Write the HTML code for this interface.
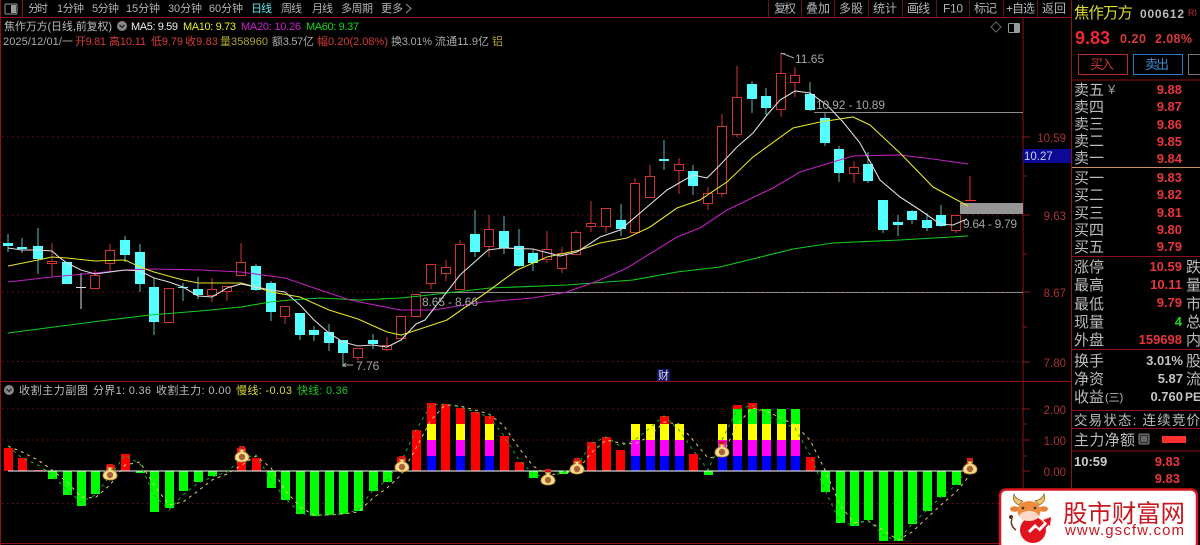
<!DOCTYPE html>
<html><head><meta charset="utf-8"><style>
html,body{margin:0;padding:0;background:#000;width:1200px;height:545px;overflow:hidden}
svg{display:block}
text{font-family:"Liberation Sans","Noto Sans CJK SC",sans-serif;white-space:pre}
.t{font-size:11px;fill:#b4b4b4}
.r{font-size:12px;fill:#b4b4b4}
.h{font-size:11px}
.l{font-size:15px;fill:#bcbcbc}
.p{font-size:13px;font-weight:bold;fill:#e8363c;text-anchor:end}
.a{font-size:11.5px;fill:#a83232;text-anchor:end}
.n{font-size:12px;fill:#a4a4a4}
</style></head><body>
<svg width="1200" height="545" viewBox="0 0 1200 545" xmlns="http://www.w3.org/2000/svg">
<defs>
<g id="bag"><path d="M-3-10h6v4h-6z" fill="#d8141c"/><path d="M-2.500-6.500 2.500-6.500 1.500-4.500C5.500-3 7-.5 7 1.500 7 4.800 3.500 6 0 6-3.500 6-7 4.800-7 1.500-7-.5-5.500-3-1.500-4.500z" fill="#f8e08c" stroke="#b98a3a" stroke-width="1"/><circle cx="0" cy="1" r="3.200" fill="#a8623c"/></g>
</defs>
<rect width="1200" height="545" fill="#000"/>
<!-- frame -->
<path d="M0.500 0V545M0 17.500H1072M22.500 0V17M1023 18V490M1071.500 0V545M0 381.500H1072M0 543.500H1000" stroke="#8c1418" stroke-width="1" fill="none"/>
<path d="M768.500 0V17M801.500 0V17M834.500 0V17M868.500 0V17M902.500 0V17M936.500 0V17M969.500 0V17M1003.500 0V17M1037.500 0V17" stroke="#6a1015" fill="none"/>
<rect x="5" y="4" width="12" height="10" rx="1" fill="none" stroke="#999"/><rect x="11" y="5" width="5" height="8" fill="#999"/>
<!-- toolbar -->
<g>
<text class="t" x="28" y="12" textLength="20">分时</text>
<text class="t" x="57" y="12" textLength="27">1分钟</text>
<text class="t" x="92" y="12" textLength="27">5分钟</text>
<text class="t" x="126" y="12" textLength="34">15分钟</text>
<text class="t" x="168" y="12" textLength="34">30分钟</text>
<text class="t" x="209" y="12" textLength="34">60分钟</text>
<text class="t" x="251" y="12" textLength="21" style="fill:#5fe6e6">日线</text>
<text class="t" x="281" y="12" textLength="21">周线</text>
<text class="t" x="312" y="12" textLength="21">月线</text>
<text class="t" x="341" y="12" textLength="32">多周期</text>
<text class="t" x="381" y="12" textLength="22">更多</text>
<path d="M406 4 411 8.500 406 13" stroke="#999" fill="none"/>
<text class="r" x="774" y="12.500" textLength="22">复权</text>
<text class="r" x="806" y="12.500" textLength="24">叠加</text>
<text class="r" x="839" y="12.500" textLength="24">多股</text>
<text class="r" x="873" y="12.500" textLength="24">统计</text>
<text class="r" x="907" y="12.500" textLength="23">画线</text>
<text class="r" x="943" y="12.500" textLength="20">F10</text>
<text class="r" x="974" y="12.500" textLength="23">标记</text>
<text class="r" x="1006" y="12.500" textLength="29">+自选</text>
<text class="r" x="1042" y="12.500" textLength="24">返回</text>
</g>
<!-- headers -->
<text class="h" x="4" y="30" textLength="108" fill="#bbb">焦作万方(日线,前复权)</text>
<circle cx="122" cy="26" r="5" fill="#888"/><path d="M119.500 25 122 27.500 124.500 25" stroke="#222" stroke-width="1.300" fill="none"/>
<text class="h" x="131" y="30" textLength="47" fill="#eee">MA5: 9.59</text>
<text class="h" x="183" y="30" textLength="53" fill="#e8e82a">MA10: 9.73</text>
<text class="h" x="241" y="30" textLength="60" fill="#d020d0">MA20: 10.26</text>
<text class="h" x="306" y="30" textLength="53" fill="#18d818">MA60: 9.37</text>
<text class="h" x="3" y="45" textLength="70" fill="#aaa">2025/12/01/一</text>
<text class="h" x="75" y="45" textLength="31" fill="#d53a3a">开9.81</text>
<text class="h" x="109" y="45" textLength="37" fill="#d53a3a">高10.11</text>
<text class="h" x="151" y="45" textLength="32" fill="#d53a3a">低9.79</text>
<text class="h" x="185" y="45" textLength="33" fill="#d53a3a">收9.83</text>
<text class="h" x="220" y="45" textLength="48" fill="#b0a530">量358960</text>
<text class="h" x="272" y="45" textLength="42" fill="#aaa">额3.57亿</text>
<text class="h" x="317" y="45" textLength="71" fill="#d53a3a">幅0.20(2.08%)</text>
<text class="h" x="391" y="45" textLength="41" fill="#aaa">换3.01%</text>
<text class="h" x="435" y="45" textLength="54" fill="#aaa">流通11.9亿</text>
<text class="h" x="492" y="45" textLength="11" fill="#b0a530">铝</text>
<path d="M996 22 1001 27 996 32 991 27z" fill="none" stroke="#666"/>
<rect x="1008.500" y="23.500" width="11" height="9" rx="1" fill="none" stroke="#999"/><rect x="1014" y="24" width="5" height="8" fill="#999"/>
<!-- dotted grid -->
<path d="M2 137H1023M2 215H1023M2 292H1023M2 361.500H1023M2 409H1023M2 440H1023M2 503.500H1000" stroke="#6e1616" stroke-dasharray="1.500 3.500" fill="none"/>
<!-- axis ticks -->
<path d="M1023 137h7M1023 215h7M1023 292h7M1023 362h7M1023 409h7M1023 440h7M1023 471h7M1023 424h4M1023 456h4M1023 176h4M1023 254h4M1023 327h4" stroke="#8a1a1a" fill="none"/>
<text class="a" x="1066" y="142">10.59</text>
<text class="a" x="1066" y="220">9.63</text>
<text class="a" x="1066" y="297">8.67</text>
<text class="a" x="1066" y="367">7.80</text>
<text class="a" x="1066" y="414">2.00</text>
<text class="a" x="1066" y="445">1.00</text>
<text class="a" x="1066" y="476">0.00</text>
<rect x="1023" y="149" width="48" height="14" fill="#0a0a96"/>
<text x="1024" y="160" font-size="11.500" fill="#cfcfe8">10.27</text>
<!-- pressure lines -->
<path d="M814 112.500H1023M420 292.500H1023" stroke="#8c8c8c" fill="none"/>
<rect x="960" y="203" width="63" height="11" fill="#969696"/>
<!-- wicks -->
<path fill="none" stroke="#58bcbc" d="M8 234V252M22 238V253M38 228V274M125 236V262M140 244V292M154 278V335M183 283V301M198 277V299M256 264V291M271 281V321M300 313V340M314 326V341M329 324V351M343 340V367M373 334V349M475 210V257M504 216V254M519 229V267M533 249V271M621 204V236M664 140V170M693 165V195M752 81V113M766 88V115M810 82V111M825 113V146M839 146V182M868 152V183M883 200V233M898 215V236M912 210V224M927 213V231M941 205V227"/>
<path fill="none" stroke="#d23434" d="M52 243V277M95 270V288M110 244V272M169 288V323M212 278V302M227 286V301M241 243V275M285 306V324M358 348V360M387 337V351M431 264V289M446 260V281M460 240V289M489 215V257M547 231V263M562 247V273M576 230V254M591 201V232M606 208V233M635 178V233M650 165V197M679 158V194M708 187V210M722 114V197M737 66V137M781 53V117M795 67V97M854 161V183M956 215V233"/>
<path fill="none" stroke="#ff2a2a" d="M970 176V200M965 200.500H976"/>
<path fill="none" stroke="#ddd" d="M81 273V309M76 287.500H86"/>
<!-- cyan bodies -->
<path fill="#55ffff" d="M3 243h10v3h-10zM17 247h10v2h-10zM33 246h10v13h-10zM62 262h10v22h-10zM120 240h10v15h-10zM135 252h10v32h-10zM149 287h10v35h-10zM178 287h10v1h-10zM193 289h10v6h-10zM251 266h10v24h-10zM266 283h10v29h-10zM295 313h10v22h-10zM309 330h10v5h-10zM324 332h10v11h-10zM338 340h10v13h-10zM368 340h10v4h-10zM470 234h10v18h-10zM499 231h10v17h-10zM514 246h10v20h-10zM528 253h10v10h-10zM616 220h10v9h-10zM659 159h10v2h-10zM688 171h10v15h-10zM747 84h10v15h-10zM761 96h10v12h-10zM805 94h10v16h-10zM820 118h10v25h-10zM834 149h10v24h-10zM863 164h10v17h-10zM878 200h10v30h-10zM893 222h10v3h-10zM907 211h10v9h-10zM922 220h10v8h-10zM936 215h10v11h-10z"/>
<!-- red bodies -->
<g fill="#000" stroke="#d23434" stroke-width="1">
<rect x="47.500" y="261.500" width="9" height="2"/><rect x="90.500" y="275.500" width="9" height="13"/><rect x="105.500" y="250.500" width="9" height="13"/><rect x="164.500" y="288.500" width="9" height="34"/><rect x="207.500" y="289.500" width="9" height="6"/><rect x="222.500" y="286.500" width="9" height="5"/><rect x="236.500" y="262.500" width="9" height="13"/><rect x="280.500" y="306.500" width="9" height="10"/><rect x="353.500" y="348.500" width="9" height="9"/><rect x="382.500" y="345.500" width="9" height="4"/><rect x="396.500" y="316.500" width="9" height="22"/><rect x="411.500" y="294.500" width="9" height="22"/><rect x="426.500" y="264.500" width="9" height="19"/><rect x="441.500" y="267.500" width="9" height="6"/><rect x="455.500" y="244.500" width="9" height="45"/><rect x="484.500" y="229.500" width="9" height="17"/><rect x="542.500" y="249.500" width="9" height="10"/><rect x="557.500" y="253.500" width="9" height="15"/><rect x="571.500" y="232.500" width="9" height="22"/><rect x="586.500" y="223.500" width="9" height="3"/><rect x="601.500" y="208.500" width="9" height="18"/><rect x="630.500" y="183.500" width="9" height="49"/><rect x="645.500" y="176.500" width="9" height="21"/><rect x="674.500" y="164.500" width="9" height="6"/><rect x="703.500" y="193.500" width="9" height="10"/><rect x="717.500" y="126.500" width="9" height="67"/><rect x="732.500" y="97.500" width="9" height="37"/><rect x="776.500" y="73.500" width="9" height="36"/><rect x="790.500" y="75.500" width="9" height="7"/><rect x="849.500" y="167.500" width="9" height="6"/><rect x="951.500" y="215.500" width="9" height="15"/>
</g>
<!-- MA lines -->
<polyline fill="none" stroke="#0fce1a" stroke-width="1.100" points="8,333 100,321 150,315 200,311 241,307 270,302 290,300 320,298 360,300 400,298 420,296 490,288 567,285 633,280 677,272 720,267 793,249 833,243 900,240 968,236"/>
<polyline fill="none" stroke="#c020c0" stroke-width="1.100" points="8,282 52,277 95,273 125,270 154,269 200,270 241,272 285,278 320,290 350,300 400,310 433,310 483,302 533,298 567,292 600,280 627,268 677,237 700,228 727,210 773,188 800,172 833,162 853,156 900,155 933,159 968,164"/>
<polyline fill="none" stroke="#e4e428" stroke-width="1.100" points="8,266 38,260 52,257 67,258 95,261 125,260 140,267 154,272 183,280 198,283 241,283 256,287 271,292 300,297 329,310 358,319 387,332 401,335 420,329 447,320 487,292 517,270 547,257 580,250 600,243 627,238 650,227 677,208 700,200 727,182 753,157 793,128 820,122 853,117 870,125 900,153 933,187 968,206"/>
<polyline fill="none" stroke="#dcdcdc" stroke-width="1.100" points="8,248 22,250 38,250 52,251 60,258 67,263 81,270 95,274 110,272 125,270 140,271 154,278 169,282 183,287 198,296 212,297 227,288 241,284 256,287 271,290 285,292 300,305 314,320 329,333 343,342 358,346 373,345 387,347 401,340 416,324 425,320 460,275 488,250 503,248 533,249 560,256 577,252 600,237 620,230 640,213 667,190 693,175 707,178 720,165 737,147 753,133 767,115 780,100 795,91 810,93 827,105 843,122 860,143 880,180 900,197 920,210 940,224 953,225 967,219"/>
<!-- annotations -->
<path d="M781 53.500 H785 M781 53 L794 58" stroke="#aaa" fill="none"/>
<text class="n" x="795" y="63">11.65</text>
<text class="n" x="816" y="109" textLength="69">10.92 - 10.89</text>
<text class="n" x="963" y="228" textLength="54">9.64 - 9.79</text>
<text class="n" x="422" y="306" textLength="56">8.65 - 8.66</text>
<path d="M343 365H353M343 365l3-2M343 365l3 2" stroke="#aaa" fill="none"/>
<text class="n" x="356" y="370">7.76</text>
<rect x="657" y="369" width="13" height="12" fill="#12126a"/>
<text x="658" y="379" font-size="11" fill="#ddd">财</text>
<!-- sub header -->
<circle cx="9" cy="390" r="5" fill="#888"/><path d="M6.500 389 9 391.500 11.500 389" stroke="#222" stroke-width="1.300" fill="none"/>
<text class="h" x="19" y="394" textLength="69" fill="#bbb">收割主力副图</text>
<text class="h" x="93" y="394" textLength="58" fill="#bbb">分界1: 0.36</text>
<text class="h" x="156" y="394" textLength="75" fill="#bbb">收割主力: 0.00</text>
<text class="h" x="236" y="394" textLength="56" fill="#d8d838">慢线: -0.03</text>
<text class="h" x="297" y="394" textLength="51" fill="#1ac81a">快线: 0.36</text>
<!-- sub bars -->
<path fill="#ff0000" d="M4 448h9v23h-9zM18 458h9v13h-9zM34 470h9v1h-9zM106 465h9v6h-9zM121 454h9v17h-9zM237 448h9v23h-9zM252 458h9v13h-9zM397 457h9v14h-9zM412 430h9v41h-9zM427 403h9v21h-9zM441 404h9v67h-9zM456 408h9v16h-9zM471 412h9v59h-9zM485 416h9v8h-9zM500 436h9v35h-9zM515 462h9v9h-9zM573 460h9v11h-9zM587 442h9v29h-9zM602 437h9v34h-9zM616 450h9v21h-9zM660 416h9v8h-9zM689 454h9v17h-9zM733 405h9v4h-9zM748 403h9v6h-9zM806 457h9v14h-9zM966 463h6v8h-6z"/>
<path fill="#ffff00" d="M427 424h9v16h-9zM456 424h9v16h-9zM485 424h9v16h-9zM631 424h9v16h-9zM646 424h9v16h-9zM660 424h9v16h-9zM675 424h9v16h-9zM718 424h9v16h-9zM733 424h9v16h-9zM748 424h9v16h-9zM762 424h9v16h-9zM777 424h9v16h-9zM791 424h9v16h-9z"/>
<path fill="#ff00ff" d="M427 440h9v16h-9zM456 440h9v16h-9zM485 440h9v16h-9zM631 440h9v16h-9zM646 440h9v16h-9zM660 440h9v16h-9zM675 440h9v16h-9zM718 440h9v16h-9zM733 440h9v16h-9zM748 440h9v16h-9zM762 440h9v16h-9zM777 440h9v16h-9zM791 440h9v16h-9z"/>
<path fill="#0000ff" d="M427 456h9v15h-9zM456 456h9v15h-9zM485 456h9v15h-9zM631 456h9v15h-9zM646 456h9v15h-9zM660 456h9v15h-9zM675 456h9v15h-9zM718 456h9v15h-9zM733 456h9v15h-9zM748 456h9v15h-9zM762 456h9v15h-9zM777 456h9v15h-9zM791 456h9v15h-9z"/>
<path fill="#00ff00" d="M48 471h9v8h-9zM63 471h9v24h-9zM77 471h9v35h-9zM91 471h9v23h-9zM136 471h9v2h-9zM150 471h9v41h-9zM165 471h9v37h-9zM179 471h9v20h-9zM194 471h9v11h-9zM208 471h9v5h-9zM267 471h9v17h-9zM281 471h9v29h-9zM296 471h9v43h-9zM310 471h9v45h-9zM325 471h9v44h-9zM339 471h9v43h-9zM354 471h9v40h-9zM369 471h9v20h-9zM383 471h9v11h-9zM529 471h9v7h-9zM559 471h9v3h-9zM704 471h9v4h-9zM733 409h9v15h-9zM748 409h9v15h-9zM762 409h9v15h-9zM777 409h9v15h-9zM791 409h9v15h-9zM821 471h9v21h-9zM836 471h9v52h-9zM850 471h9v55h-9zM864 471h9v49h-9zM879 471h9v70h-9zM894 471h9v70h-9zM908 471h9v53h-9zM923 471h9v40h-9zM937 471h9v26h-9zM952 471h9v14h-9z"/>
<path d="M8 471H963" stroke="#fff" stroke-width="1" fill="none"/>
<polyline fill="none" stroke="#e0d070" stroke-dasharray="3 4" points="8,446 22,452 38,460 52,470 67,482 81,497 95,498 110,485 125,465 140,462 154,485 169,505 183,502 198,491 212,480 227,474 242,465 256,456 271,468 285,490 300,507 314,515 329,515 343,514 358,512 373,498 387,488 401,475 416,448 431,420 445,405 460,406 475,410 489,414 504,426 519,448 533,466 548,475 563,473 577,471 591,453 606,440 620,443 635,444 650,436 664,422 679,424 693,440 708,458 722,456 737,425 752,408 766,411 781,418 795,425 810,440 825,470 840,505 854,523 868,521 883,530 898,540 912,532 927,518 941,505 956,492 970,475"/>
<polyline fill="none" stroke="#18b028" stroke-dasharray="3 4" points="8,446 22,458 38,465 52,475 67,490 81,502 95,495 110,476 125,455 140,464 154,495 169,510 183,495 198,483 212,477 227,472 242,458 256,455 271,480 285,498 300,513 314,516 329,515 343,514 358,510 373,490 387,480 401,462 416,430 431,405 445,404 460,407 475,412 489,417 504,436 519,460 533,474 548,478 563,472 577,466 591,444 606,437 620,446 635,440 650,428 664,416 679,430 693,450 708,470 722,440 737,410 752,405 766,415 781,422 795,428 810,455 825,490 840,522 854,525 868,520 883,535 898,541 912,524 927,510 941,497 956,485 970,465"/>
<use href="#bag" x="110" y="474"/><use href="#bag" x="242" y="456"/><use href="#bag" x="402" y="466"/><use href="#bag" x="548" y="479"/><use href="#bag" x="577" y="468"/><use href="#bag" x="722" y="451"/><use href="#bag" x="970" y="468"/>
<!-- side panel -->
<path d="M1072 80H1200M1072 256.500H1200M1072 349.500H1200M1072 410.500H1200M1072 428.500H1200M1072 451H1200" stroke="#8a1218" fill="none"/>
<path d="M1072 167.500H1200" stroke="#c89068" fill="none"/>
<text x="1074" y="18" font-size="15.500" fill="#d8d838" textLength="59">焦作万方</text>
<text x="1140" y="18" font-size="12" font-weight="bold" fill="#bbb" textLength="44">000612</text>
<text x="1188" y="16" font-size="9" fill="#c03030">RI</text>
<text x="1075" y="44" font-size="18" font-weight="bold" fill="#ee2a30">9.83</text>
<text x="1120" y="43" font-size="12.500" font-weight="bold" fill="#d83a3a" textLength="26">0.20</text>
<text x="1155" y="43" font-size="12.500" font-weight="bold" fill="#d83a3a" textLength="37">2.08%</text>
<rect x="1078.500" y="54.500" width="49" height="20" fill="none" stroke="#b82a2a"/>
<text x="1090" y="69" font-size="13" fill="#c83434" textLength="24">买入</text>
<rect x="1133.500" y="54.500" width="49" height="20" fill="none" stroke="#2f78c0"/>
<text x="1145" y="69" font-size="13" fill="#3a8ad0" textLength="24">卖出</text>
<rect x="1188.500" y="54.500" width="20" height="20" fill="none" stroke="#777"/>
<text class="l" x="1074" y="95">卖五</text><text x="1108" y="94" font-size="13" fill="#999">¥</text>
<text class="l" x="1074" y="112">卖四</text><text class="l" x="1074" y="129">卖三</text><text class="l" x="1074" y="146">卖二</text><text class="l" x="1074" y="163">卖一</text>
<text class="p" x="1182" y="94">9.88</text><text class="p" x="1182" y="111">9.87</text><text class="p" x="1182" y="129">9.86</text><text class="p" x="1182" y="146">9.85</text><text class="p" x="1182" y="163">9.84</text>
<text class="l" x="1074" y="183">买一</text><text class="l" x="1074" y="200">买二</text><text class="l" x="1074" y="218">买三</text><text class="l" x="1074" y="235">买四</text><text class="l" x="1074" y="252">买五</text>
<text class="p" x="1182" y="182">9.83</text><text class="p" x="1182" y="199">9.82</text><text class="p" x="1182" y="217">9.81</text><text class="p" x="1182" y="234">9.80</text><text class="p" x="1182" y="251">9.79</text>
<text class="l" x="1074" y="272">涨停</text><text class="l" x="1074" y="290">最高</text><text class="l" x="1074" y="309">最低</text><text class="l" x="1074" y="327">现量</text><text class="l" x="1074" y="345">外盘</text>
<text class="p" x="1182" y="271">10.59</text><text class="p" x="1182" y="289">10.11</text><text class="p" x="1182" y="307">9.79</text><text class="p" x="1182" y="326" style="fill:#18d818">4</text><text class="p" x="1182" y="344">159698</text>
<text class="l" x="1186" y="272">跌</text><text class="l" x="1186" y="290">量</text><text class="l" x="1186" y="309">市</text><text class="l" x="1186" y="327">总</text><text class="l" x="1186" y="345">内</text>
<text class="l" x="1074" y="366">换手</text><text class="l" x="1074" y="384">净资</text><text class="l" x="1074" y="402">收益</text><text x="1105" y="401" font-size="11" fill="#bbb">(三)</text>
<text class="p" x="1183" y="365" style="fill:#c4c4c4">3.01%</text><text class="p" x="1183" y="383" style="fill:#c4c4c4">5.87</text><text class="p" x="1183" y="401" style="fill:#c4c4c4">0.760</text>
<text class="l" x="1186" y="366">股</text><text class="l" x="1186" y="384">流</text><text x="1185" y="401" font-size="12" font-weight="bold" fill="#c4c4c4">PE</text>
<text class="l" x="1074" y="425" style="font-size:13.500px" textLength="126">交易状态: 连续竞价</text>
<text class="l" x="1074" y="445" textLength="61">主力净额</text>
<rect x="1139" y="434" width="10" height="10" rx="1" fill="#333" stroke="#888"/><path d="M1141 437h6M1141 439h6M1141 441h6" stroke="#999"/>
<rect x="1162" y="436" width="24" height="7" fill="#ff3030"/>
<text x="1074" y="466" font-size="13" font-weight="bold" fill="#ccc">10:59</text>
<text class="p" x="1180" y="466">9.83</text><text class="p" x="1180" y="483">9.83</text>
<!-- watermark -->
<rect x="1000" y="489.500" width="197" height="60" rx="6" fill="#fff" stroke="#d8141c" stroke-width="2.500"/>
<path d="M1012 519c-2 5 1 9 4 11" fill="none" stroke="#6a3a20" stroke-width="1.500"/><circle cx="1011" cy="517" r="2" fill="#5a3018"/>
<circle cx="1033" cy="530" r="13" fill="#e0141c"/>
<path d="M1029 532l6-6 4 4 9-9" fill="none" stroke="#fff" stroke-width="3"/>
<path d="M1032 533l4-4 4 4 8-9" fill="none" stroke="#e0141c" stroke-width="1.800"/>
<path d="M1043 520 1051 517 1050 526z" fill="#e0141c"/>
<path d="M1019 505c-5-2-7-6-5-11 1 4 5 6 9 7zM1039 505c5-2 7-6 5-11-1 4-5 6-9 7z" fill="#f2c26a" stroke="#8a5a20" stroke-width=".7"/>
<ellipse cx="1014.500" cy="509" rx="4.500" ry="2.800" fill="#e8803a"/><ellipse cx="1043.500" cy="509" rx="4.500" ry="2.800" fill="#e8803a"/>
<ellipse cx="1029" cy="511" rx="11.500" ry="10" fill="#f08a3c"/>
<ellipse cx="1029" cy="516" rx="9.500" ry="5" fill="#ffd7c8"/>
<circle cx="1023" cy="508" r="1.300" fill="#333"/><circle cx="1035" cy="508" r="1.300" fill="#333"/>
<text x="1063" y="522" font-size="24.500" fill="#c8181f" textLength="122">股市财富网</text>
<text x="1065" y="535" font-size="15" fill="#c8181f" textLength="119">www.gscfw.com</text>
</svg>
</body></html>
